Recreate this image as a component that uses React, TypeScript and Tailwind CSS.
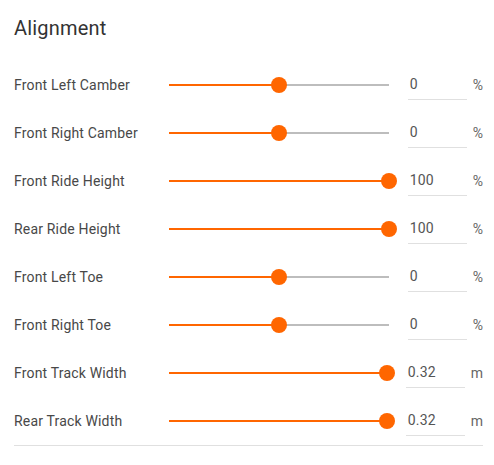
import React from 'react';

interface Setting {
  label: string;
  value: string;
  pct: number;
  unit: string;
}

const settings: Setting[] = [
  { label: 'Front Left Camber', value: '0', pct: 50, unit: '%' },
  { label: 'Front Right Camber', value: '0', pct: 50, unit: '%' },
  { label: 'Front Ride Height', value: '100', pct: 100, unit: '%' },
  { label: 'Rear Ride Height', value: '100', pct: 100, unit: '%' },
  { label: 'Front Left Toe', value: '0', pct: 50, unit: '%' },
  { label: 'Front Right Toe', value: '0', pct: 50, unit: '%' },
  { label: 'Front Track Width', value: '0.32', pct: 100, unit: 'm' },
  { label: 'Rear Track Width', value: '0.32', pct: 100, unit: 'm' },
];

function Slider({ pct }: { pct: number }) {
  return (
    <div className="relative flex-1 h-4 flex items-center">
      <div className="w-full h-[2px] bg-[#bdbdbd]" />
      <div className="absolute left-0 h-[2px] bg-[#ff6600]" style={{ width: `${pct}%` }} />
      <div
        className="absolute w-4 h-4 -ml-2 rounded-full bg-[#ff6600]"
        style={{ left: `${pct}%` }}
      />
    </div>
  );
}

export default function App() {
  return (
    <div className="w-[494px] h-[465px] bg-white pl-[14px] pr-[11px] font-['Roboto',sans-serif]">
      <h2 className="pt-[14px] h-[61px] text-[20px] leading-[28px] tracking-[0.2px] text-[#333]">Alignment</h2>
      <div className="border-b border-[#e0e0e0]">
        {settings.map((s) => (
          <div key={s.label} className="flex items-center h-12">
            <div className="w-[155px] text-[14px] tracking-[0.18px] text-[#484848]">{s.label}</div>
            <Slider pct={s.pct} />
            <div className="ml-[19px] w-[59px] h-[30px] mt-[-1px] flex items-center pl-[2px] border-b border-[#e0e0e0] text-[14px] tracking-[0.18px] text-[#555]">
              {s.value}
            </div>
            <div className="ml-[6px] text-[14px] text-[#666]">{s.unit}</div>
          </div>
        ))}
      </div>
    </div>
  );
}
